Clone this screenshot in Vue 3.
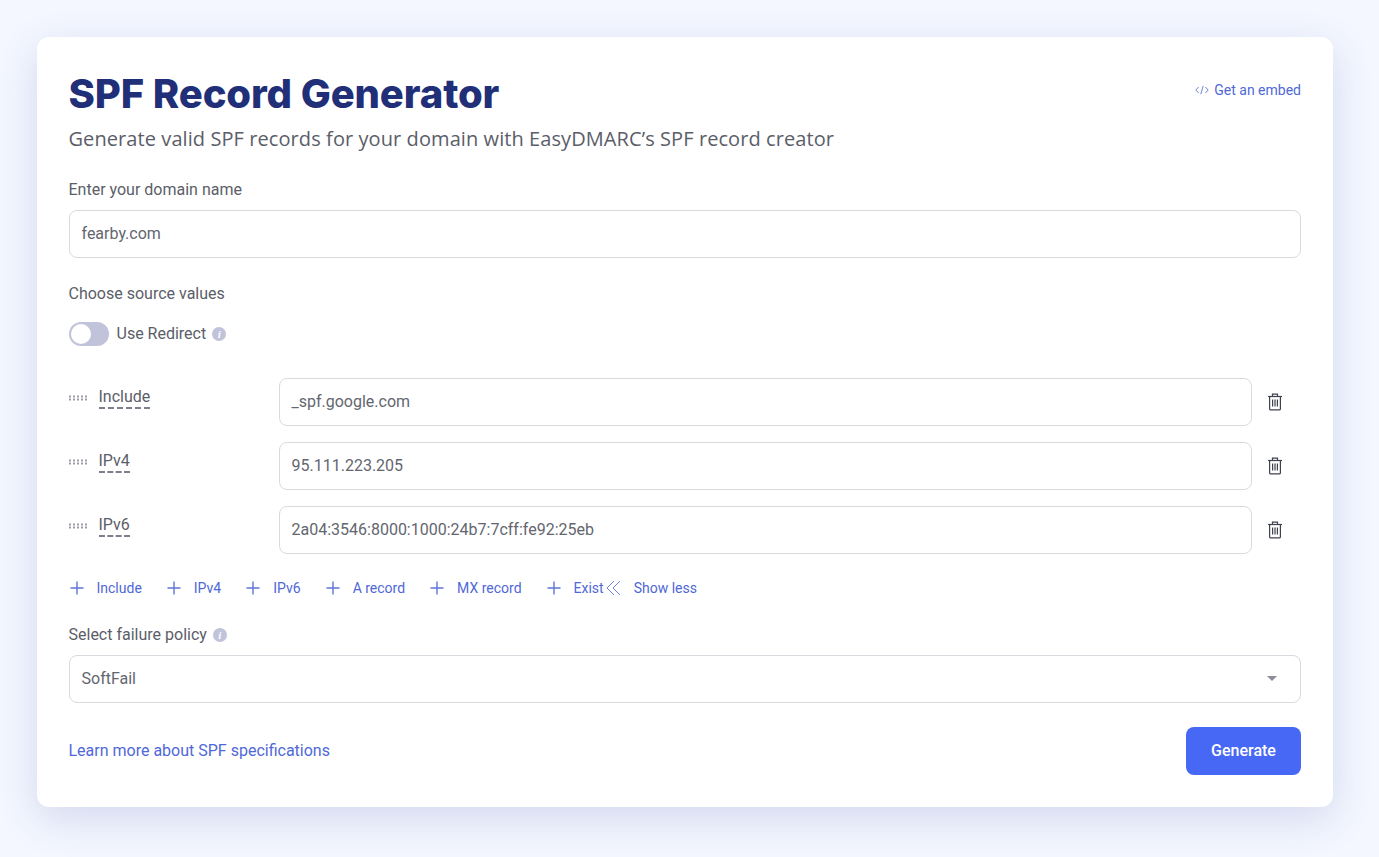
<script setup>
const rows = [
  { label: 'Include', value: '_spf.google.com' },
  { label: 'IPv4', value: '95.111.223.205' },
  { label: 'IPv6', value: '2a04:3546:8000:1000:24b7:7cff:fe92:25eb' },
]
const adds = ['Include', 'IPv4', 'IPv6', 'A record', 'MX record', 'Exist']
</script>

<template>
  <div class="page">
    <main class="card">
      <header class="head">
        <h1 class="title">SPF Record Generator</h1>
        <a class="embed">
          <svg width="14" height="10" viewBox="0 0 14 10" fill="none" stroke="#5f75d8" stroke-width="0.9">
            <path d="M3.6 2 L0.8 5 L3.6 8" />
            <path d="M10.4 2 L13.2 5 L10.4 8" />
            <path d="M8.2 0.8 L5.8 9.2" />
          </svg>
          <span>Get an embed</span>
        </a>
      </header>
      <p class="subtitle">Generate valid SPF records for your domain with EasyDMARC’s SPF record creator</p>

      <label class="label domain-label">Enter your domain name</label>
      <div class="field">fearby.com</div>

      <div class="label source-label">Choose source values</div>
      <div class="toggle-row">
        <span class="toggle"><span class="knob"></span></span>
        <span class="toggle-text">Use Redirect</span>
        <span class="info">i</span>
      </div>

      <div class="rows">
        <div v-for="row in rows" :key="row.label" class="row">
          <div class="row-name">
            <svg class="grip" width="18" height="6" viewBox="0 0 18 6" fill="#9a9da8">
              <template v-for="x in [0, 4, 8, 12, 16]" :key="x">
                <rect :x="x" y="0.5" width="2" height="2" />
                <rect :x="x" y="3.5" width="2" height="2" />
              </template>
            </svg>
            <span class="row-label">{{ row.label }}</span>
          </div>
          <div class="field row-field">{{ row.value }}</div>
          <span class="trash-cell">
            <svg width="16" height="18" viewBox="0 0 16 18" fill="none" stroke="#3f424c" stroke-width="1.2">
              <path d="M1 3.5 H15" />
              <path d="M5.5 3.5 V1.2 H10.5 V3.5" />
              <path d="M2.6 3.5 V16 Q2.6 16.8 3.4 16.8 H12.6 Q13.4 16.8 13.4 16 V3.5" />
              <path d="M5.6 6.5 V13.5 M8 6.5 V13.5 M10.4 6.5 V13.5" />
            </svg>
          </span>
        </div>
      </div>

      <div class="adds">
        <a v-for="add in adds" :key="add" class="add">
          <svg width="16" height="16" viewBox="0 0 16 16" fill="none" stroke="#5f75d8" stroke-width="1.4">
            <path d="M8 1.5 V14.5 M1.5 8 H14.5" />
          </svg>
          <span>{{ add }}</span>
        </a>
        <a class="less">
          <svg width="15" height="16" viewBox="0 0 15 16" fill="none" stroke="#5f75d8" stroke-width="0.9">
            <path d="M8 1 L1 8 L8 15" />
            <path d="M14 1 L7 8 L14 15" />
          </svg>
          <span>Show less</span>
        </a>
      </div>

      <div class="label policy-label">
        <span>Select failure policy</span>
        <span class="info">i</span>
      </div>
      <div class="field select">
        <span>SoftFail</span>
        <span class="caret"></span>
      </div>

      <footer class="foot">
        <a class="learn">Learn more about SPF specifications</a>
        <button class="generate" type="button">Generate</button>
      </footer>
    </main>
  </div>
</template>

<style>
html, body { margin: 0; background: #f4f7ff; }
</style>

<style scoped>
.page {
  box-sizing: border-box;
  min-height: 857px;
  padding: 37px 46px 50px 37px;
  background: #f4f7ff;
  font-family: Roboto, "Liberation Sans", sans-serif;
  color: #5b5e69;
}
.card {
  box-sizing: border-box;
  height: 770px;
  padding: 32px 32px 32px 31.5px;
  background: #fff;
  border-radius: 12px;
  box-shadow: 0 12px 40px rgba(41, 60, 150, 0.16);
}
.head {
  display: flex;
  justify-content: space-between;
  align-items: flex-start;
}
.title {
  margin: 0;
  font-family: Inter, sans-serif;
  font-size: 40px;
  line-height: 50px;
  font-weight: 800;
  letter-spacing: -0.1px;
  color: #212f78;
}
.embed {
  display: flex;
  align-items: center;
  gap: 5px;
  margin-top: 11px;
  font-size: 14px;
  line-height: 20px;
  color: #4f68d8;
}
.subtitle {
  margin: 7px 0 0;
  font-family: "Open Sans", sans-serif;
  font-size: 20px;
  line-height: 26px;
  letter-spacing: 0.08px;
  color: #5b5e69;
}
.label {
  font-size: 16px;
  line-height: 20px;
  color: #5b5e69;
}
.domain-label { display: block; margin-top: 28px; }
.field {
  box-sizing: border-box;
  display: flex;
  align-items: center;
  height: 48px;
  margin-top: 10px;
  padding: 0 12px 2px;
  border: 1px solid #d9dae0;
  border-radius: 8px;
  font-size: 16px;
  color: #63666f;
  background: #fff;
}
.source-label { margin-top: 26px; }
.toggle-row {
  display: flex;
  align-items: center;
  height: 24px;
  margin-top: 18px;
}
.toggle {
  box-sizing: border-box;
  display: block;
  width: 40px;
  height: 24px;
  padding: 2px;
  border-radius: 12px;
  background: #c0c3d9;
}
.knob {
  display: block;
  width: 20px;
  height: 20px;
  border-radius: 50%;
  background: #fff;
}
.toggle-text {
  margin-left: 8px;
  margin-bottom: 2px;
  font-size: 16px;
}
.info {
  display: inline-flex;
  align-items: center;
  justify-content: center;
  width: 14px;
  height: 14px;
  margin-left: 6px;
  border-radius: 50%;
  background: #c0c3d9;
  color: #fff;
  font: italic 700 11px/14px "Liberation Serif", serif;
}
.rows {
  display: flex;
  flex-direction: column;
  gap: 16px;
  margin-top: 32px;
}
.row {
  display: flex;
  align-items: flex-start;
}
.row-name {
  display: flex;
  align-items: center;
  width: 210px;
  height: 40px;
  flex: none;
}
.grip { flex: none; }
.row-label {
  margin-left: 12px;
  font-size: 16px;
  line-height: 20px;
  border-bottom: 2px dashed #7d808a;
  color: #5b5e69;
}
.row-field { flex: 1; margin-top: 0; }
.trash-cell {
  display: flex;
  justify-content: flex-start;
  align-items: center;
  width: 49px;
  height: 48px;
  flex: none;
  padding-left: 15px;
  box-sizing: border-box;
}
.adds {
  display: flex;
  align-items: center;
  height: 20px;
  margin-top: 24px;
  font-size: 14px;
  color: #4f68d8;
}
.add {
  display: flex;
  align-items: center;
  gap: 12px;
  margin-right: 24px;
}
.add:nth-child(6) { margin-right: 2px; }
.less {
  display: flex;
  align-items: center;
  gap: 13px;
}
.policy-label {
  display: flex;
  align-items: center;
  margin-top: 27px;
}
.select {
  justify-content: space-between;
  margin-top: 10px;
  padding-right: 23px;
}
.caret {
  width: 0;
  height: 0;
  border-left: 5px solid transparent;
  border-right: 5px solid transparent;
  border-top: 5px solid #8a8d98;
}
.foot {
  display: flex;
  justify-content: space-between;
  align-items: center;
  margin-top: 24px;
}
.learn { font-size: 16px; margin-bottom: 2px; color: #4f68d8; }
.generate {
  width: 115px;
  height: 48px;
  padding: 0 0 2px;
  border: 0;
  border-radius: 8px;
  background: #4767f5;
  color: #fff;
  font-family: Roboto, sans-serif;
  font-size: 16px;
  font-weight: 500;
}
</style>
